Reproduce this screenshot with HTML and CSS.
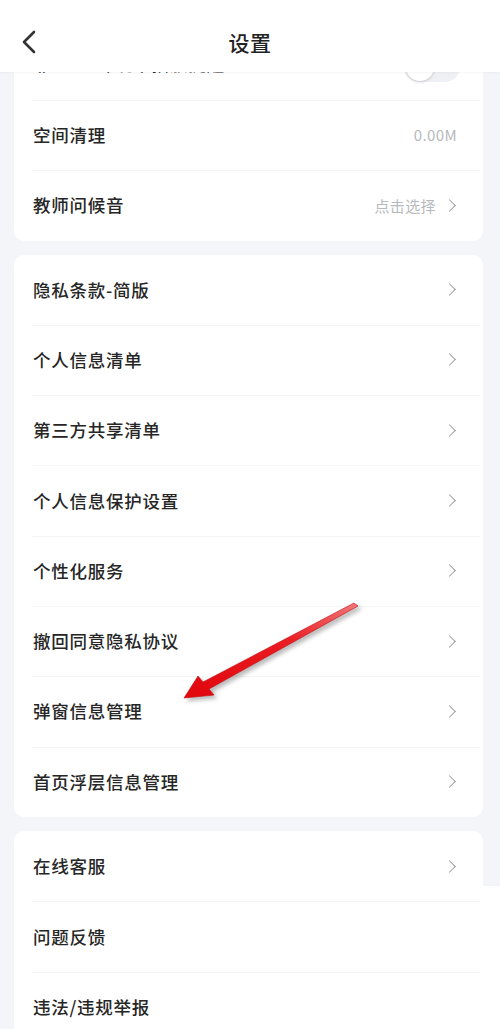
FILE: index.html
```html
<!DOCTYPE html>
<html lang="zh-CN">
<head>
<meta charset="utf-8">
<title>设置</title>
<link rel="stylesheet" href="styles.css">
</head>
<body>
<header class="topbar">
  <svg class="back" width="16" height="24" viewBox="0 0 16 24"><polyline points="13,2 3,12 13,22" fill="none" stroke="#333" stroke-width="2.6" stroke-linecap="round" stroke-linejoin="round"/></svg>
  <h1 class="title">设置</h1>
</header>
<main class="page">
  <section class="card">
    <div class="row"><span class="label">非Wi-Fi环境下播放提醒</span><span class="toggle"><span class="knob"></span></span></div>
    <div class="row"><span class="label">空间清理</span><span class="value">0.00M</span></div>
    <div class="row"><span class="label">教师问候音</span><span class="value">点击选择<i class="chev"></i></span></div>
  </section>
  <section class="card card-b">
    <div class="row"><span class="label">隐私条款-简版</span><i class="chev"></i></div>
    <div class="row"><span class="label">个人信息清单</span><i class="chev"></i></div>
    <div class="row"><span class="label">第三方共享清单</span><i class="chev"></i></div>
    <div class="row"><span class="label">个人信息保护设置</span><i class="chev"></i></div>
    <div class="row"><span class="label">个性化服务</span><i class="chev"></i></div>
    <div class="row"><span class="label">撤回同意隐私协议</span><i class="chev"></i></div>
    <div class="row"><span class="label">弹窗信息管理</span><i class="chev"></i></div>
    <div class="row"><span class="label">首页浮层信息管理</span><i class="chev"></i></div>
  </section>
  <section class="card card-c">
    <div class="row"><span class="label">在线客服</span><i class="chev"></i></div>
    <div class="row"><span class="label">问题反馈</span></div>
    <div class="row"><span class="label">违法/违规举报</span></div>
  </section>
</main>
<svg class="pointer" width="500" height="1029" viewBox="0 0 500 1029">
  <defs>
    <linearGradient id="rg" x1="0" y1="1" x2="1" y2="0">
      <stop offset="0" stop-color="#e0060c"/>
      <stop offset="0.6" stop-color="#ea1d22"/>
      <stop offset="1" stop-color="#f07a7a"/>
    </linearGradient>
  </defs>
  <polygon points="184,698 198,676 203,682 354,603 358,606 209,689 214,695" fill="url(#rg)" stroke="#c40a10" stroke-width="0.6" stroke-linejoin="round"/>
</svg>
<div class="edge-mask"></div>
</body>
</html>
```
FILE: styles.css
```css
* { box-sizing: border-box; }
html, body {
  margin: 0;
  padding: 0;
}
body {
  width: 500px;
  height: 1029px;
  overflow: hidden;
  background: #f3f5f8;
  font-family: "Noto Sans CJK SC", "Noto Sans", sans-serif;
  color: #262626;
  position: relative;
}
.topbar {
  position: absolute;
  top: 0;
  left: 0;
  width: 500px;
  height: 72px;
  background: #fff;
  z-index: 5;
  display: flex;
  align-items: center;
  justify-content: center;
  box-shadow: 0 1px 2px rgba(0,0,0,0.04);
}
.back {
  position: absolute;
  left: 21px;
  top: 30px;
}
.title {
  margin: 12px 0 0 0;
  font-size: 21px;
  font-weight: 500;
  color: #222;
  letter-spacing: 0.5px;
}
.page {
  padding: 29px 17px 0 14px;
  display: flex;
  flex-direction: column;
  gap: 14px;
}
.card {
  background: #fff;
  border-radius: 10px;
  display: flex;
  flex-direction: column;
}
.row {
  height: 70.5px;
  display: flex;
  align-items: center;
  justify-content: space-between;
  padding: 0 26px 0 19px;
  position: relative;
}
.card-b .row { height: 70.3px; }
.row + .row::before {
  content: "";
  position: absolute;
  top: 0;
  left: 18px;
  right: 3px;
  height: 1px;
  background: #f5f5f6;
}
.label {
  font-size: 17.5px;
  line-height: 20px;
  font-weight: 500;
  color: #262626;
  letter-spacing: 0.75px;
}
.value {
  font-size: 15px;
  color: #b7b9bd;
  display: flex;
  align-items: center;
  gap: 9px;
  letter-spacing: 0.4px;
}
.chev {
  display: inline-block;
  width: 9px;
  height: 9px;
  border-top: 1.6px solid #9c9ea2;
  border-right: 1.6px solid #9c9ea2;
  transform: rotate(45deg);
  margin-right: 3px;
}
.toggle {
  width: 56px;
  height: 30px;
  border-radius: 15px;
  background: #eef0f3;
  position: relative;
  margin-right: -3px;
  margin-top: 6px;
}
.knob {
  position: absolute;
  left: 2px;
  top: 1px;
  width: 28px;
  height: 28px;
  border-radius: 50%;
  background: #fff;
  box-shadow: 0 1px 3px rgba(0,0,0,0.18);
}
.pointer {
  position: absolute;
  top: 0;
  left: 0;
  z-index: 6;
  pointer-events: none;
  filter: drop-shadow(3px 3px 2px rgba(0,0,0,0.28));
}
.edge-mask {
  position: absolute;
  left: 483px;
  top: 886px;
  width: 17px;
  height: 143px;
  background: #fff;
  z-index: 4;
}
```
